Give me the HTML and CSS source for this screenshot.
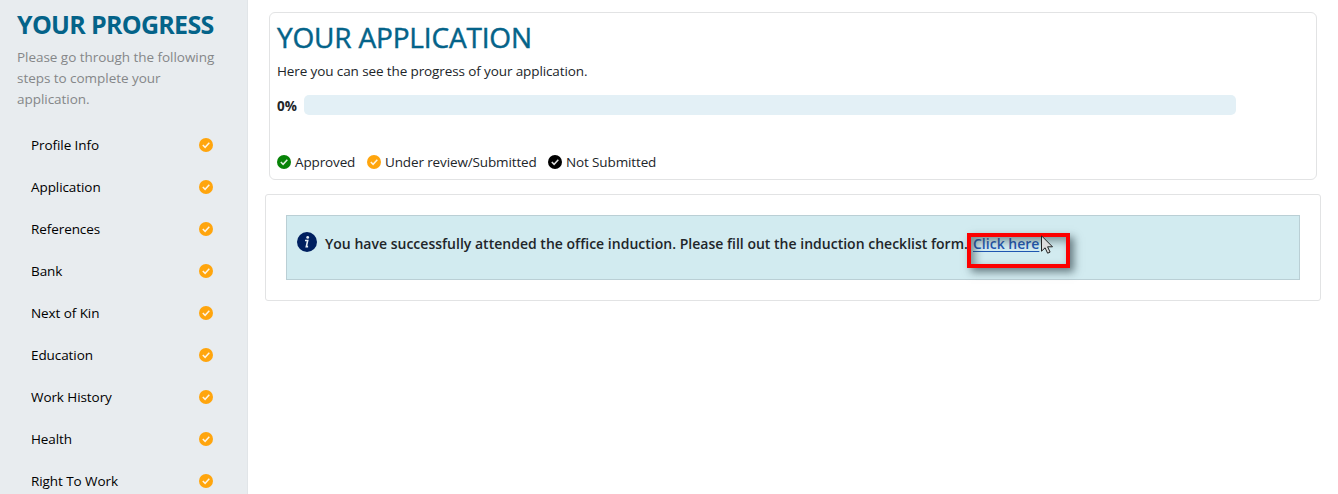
FILE: index.html
```html
<!DOCTYPE html>
<html lang="en">
<head>
<meta charset="utf-8">
<title>Your application</title>
<link rel="stylesheet" href="styles.css">
</head>
<body>
<svg class="defs" width="0" height="0" aria-hidden="true">
  <symbol id="check" viewBox="0 0 14 14"><circle cx="7" cy="7" r="7" fill="currentColor"/><path d="M3.8 7l2.3 2.3 4.2-4.5" fill="none" stroke="#fff" stroke-opacity=".88" stroke-width="1.5"/></symbol>
</svg>
<div class="page">
  <aside class="sidebar">
    <h2 class="side-title">YOUR PROGRESS</h2>
    <p class="side-text">Please go through the following<br>steps to complete your<br>application.</p>
    <ul class="steps">
      <li><span>Profile Info</span><svg class="check review"><use href="#check"/></svg></li>
      <li><span>Application</span><svg class="check review"><use href="#check"/></svg></li>
      <li><span>References</span><svg class="check review"><use href="#check"/></svg></li>
      <li><span>Bank</span><svg class="check review"><use href="#check"/></svg></li>
      <li><span>Next of Kin</span><svg class="check review"><use href="#check"/></svg></li>
      <li><span>Education</span><svg class="check review"><use href="#check"/></svg></li>
      <li><span>Work History</span><svg class="check review"><use href="#check"/></svg></li>
      <li><span>Health</span><svg class="check review"><use href="#check"/></svg></li>
      <li><span>Right To Work</span><svg class="check review"><use href="#check"/></svg></li>
    </ul>
  </aside>
  <main class="main">
    <section class="card">
      <h1 class="title">YOUR APPLICATION</h1>
      <p class="intro">Here you can see the progress of your application.</p>
      <div class="progress"><b class="percent">0%</b><div class="track"></div></div>
      <div class="legend">
        <span class="key k1"><svg class="check approved"><use href="#check"/></svg><span>Approved</span></span>
        <span class="key k2"><svg class="check review"><use href="#check"/></svg><span>Under review/Submitted</span></span>
        <span class="key k3"><svg class="check missing"><use href="#check"/></svg><span>Not Submitted</span></span>
      </div>
    </section>
    <section class="notice">
      <div class="alert">
        <svg class="info" viewBox="0 0 20 20"><circle cx="10" cy="10" r="10" fill="#002060"/><circle cx="10.7" cy="5.4" r="1.4" fill="#e4edf4"/><path d="M8 8.5h2.7L9.3 14.6h1.8" fill="none" stroke="#e4edf4" stroke-width="1.6"/></svg>
        <p class="message"><span class="copy">You have successfully attended the office induction. Please fill out the induction checklist form.</span><a class="link" href="#">Click here<span class="highlight"></span><svg class="cursor" viewBox="0 0 12 19"><path d="M.5.8v15.4l3.6-3.4 2.5 5.4 2.5-1.1-2.5-5.3h4.9z" fill="#ddd" stroke="#222" stroke-width="1"/></svg></a></p>
      </div>
    </section>
  </main>
</div>
</body>
</html>
```
FILE: styles.css
```css
* { box-sizing: border-box; }
body { margin: 0; background: #fff; color: #212529; font: 13.5px/21px "Open Sans", "Noto Sans", sans-serif; letter-spacing: -.08px; overflow: hidden; }
h1, h2, p, ul { margin: 0; padding: 0; }
span { white-space: nowrap; }
.defs { position: absolute; }
.page { display: flex; height: 494px; overflow: hidden; }
.sidebar { flex: none; width: 248px; padding: 9px 17px 0; background: #e8ecef; border-right: 1px solid #e1e5e8; }
.side-title { color: #046389; font-size: 25px; line-height: 30px; font-weight: 700; letter-spacing: -.7px; white-space: nowrap; }
.side-text { margin-top: 8px; color: #858789; letter-spacing: -.04px; white-space: nowrap; }
.steps { list-style: none; margin-top: 14px; padding: 0 17px 0 14px; color: #000; }
.steps li { display: flex; justify-content: space-between; align-items: center; height: 42px; }
.check { display: block; flex: none; width: 14px; height: 14px; }
.approved { color: #078307; }
.review { color: #ffa50d; }
.missing { color: #000; }
.main { flex: 1; padding: 12px 17px 0; }
.card { height: 168px; margin: 0 4px; padding: 7px 7px 0; border: 1px solid #e2e3e4; border-radius: 6px; }
.title { color: #046389; font-size: 28px; line-height: 34px; font-weight: 500; letter-spacing: -.18px; -webkit-text-stroke: .45px #046389; white-space: nowrap; }
.intro { margin-top: 7px; letter-spacing: -.11px; }
.progress { display: flex; align-items: center; height: 20px; margin-top: 13px; }
.percent { width: 27px; padding-top: 2px; line-height: 20px; letter-spacing: 0; }
.track { width: 932px; height: 20px; border-radius: 5px; background: #e3f0f6; }
.legend { display: flex; margin-top: 36px; }
.key { display: flex; align-items: center; gap: 4px; }
.key > span { padding-top: 1px; letter-spacing: -.13px; }
.k1 { width: 90px; }
.k2 { width: 181px; }
.notice { height: 107px; margin-top: 14px; padding: 20px; border: 1px solid #e2e3e4; border-radius: 3px; }
.alert { display: flex; height: 65px; padding: 16px 10px; background: #d2ebf0; border: 1px solid #bacfd5; }
.info { flex: none; width: 20px; height: 20px; }
.message { display: flex; margin-left: 8px; padding-top: 1px; font-size: 14px; line-height: 21px; font-weight: 600; letter-spacing: 0; }
.copy { width: 648px; letter-spacing: .01px; }
.link { position: relative; color: #1f56b0; text-underline-offset: 2px; }
.highlight { position: absolute; left: -6px; top: 0; width: 103px; height: 35px; border: 4px solid #fc0000; box-shadow: 4px 4px 8px rgba(45,65,70,.65), inset 4px 4px 8px rgba(45,65,70,.55); }
.cursor { position: absolute; left: 68px; top: 2px; width: 12px; height: 19px; }
```
